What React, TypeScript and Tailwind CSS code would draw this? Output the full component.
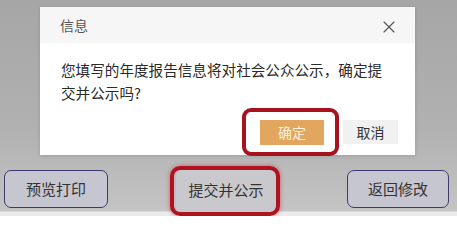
import { X } from "lucide-react";

const cjk = { fontFamily: '"Noto Sans CJK SC", "Noto Sans", sans-serif' };

export default function App() {
  return (
    <div
      className="w-[457px] h-[216px] overflow-hidden flex flex-col bg-[linear-gradient(to_bottom,#a6a6a6_0%,#b1b1b1_60%,#c4c4c4_97.5%,#ebebeb_98.2%,#ebebeb_100%)]"
      style={cjk}
    >
      {/* dialog */}
      <div className="mt-[7px] ml-[40px] w-[375px] h-[148px] bg-white flex flex-col shadow-[0_1px_4px_rgba(0,0,0,0.15)]">
        <div className="h-[36px] bg-[#f6f6f6] pl-[20px] pr-[16px] flex items-center justify-between">
          <span className="text-[14px] text-[#555]">信息</span>
          <X className="w-[20px] h-[20px] text-[#555] mt-[4px]" strokeWidth={1.4} />
        </div>
        <div className="pt-[15px] pl-[21px]">
          <p className="w-[330px] text-[14.6px] leading-[23px] text-[#2a2a2a]">
            您填写的年度报告信息将对社会公众公示，确定提交并公示吗?
          </p>
        </div>
        <div className="mt-[15px] pr-[17px] flex justify-end items-center gap-[19px]">
          <div className="relative">
            <button className="w-[64px] h-[25px] bg-[#e2a65f] text-[14px] text-[#fdf0dc]">确定</button>
            <div className="absolute -left-[18px] -top-[11px] -right-[15px] -bottom-[11px] border-[4px] border-[#a8121f] rounded-[9px]" />
          </div>
          <button className="w-[55px] h-[24px] bg-[#f1f1f1] text-[14px] text-[#333]">取消</button>
        </div>
      </div>

      {/* page buttons */}
      <div className="mt-[15px] pl-[4px] pr-[8px] flex justify-between items-start">
        <button className="w-[104px] h-[38px] rounded-[7px] border-[1.5px] border-[#3d3b6e] bg-[#c6c6d0] text-[15px] text-[#333]">
          预览打印
        </button>
        <div className="relative ml-[-3px]">
          <button className="w-[100px] h-[42px] rounded-t-[6px] bg-[#c9c9cd] text-[15px] text-[#333] pb-[2px]">
            提交并公示
          </button>
          <div className="absolute -left-[6px] -top-[4px] -right-[4px] -bottom-[4px] border-[4px] border-[#b0121f] rounded-[10px] shadow-[0_0_4px_rgba(200,30,40,0.6)]" />
        </div>
        <button className="w-[102px] h-[38px] rounded-[7px] border-[1.5px] border-[#3d3b6e] bg-[#c6c6d0] text-[15px] text-[#333]">
          返回修改
        </button>
      </div>
    </div>
  );
}
